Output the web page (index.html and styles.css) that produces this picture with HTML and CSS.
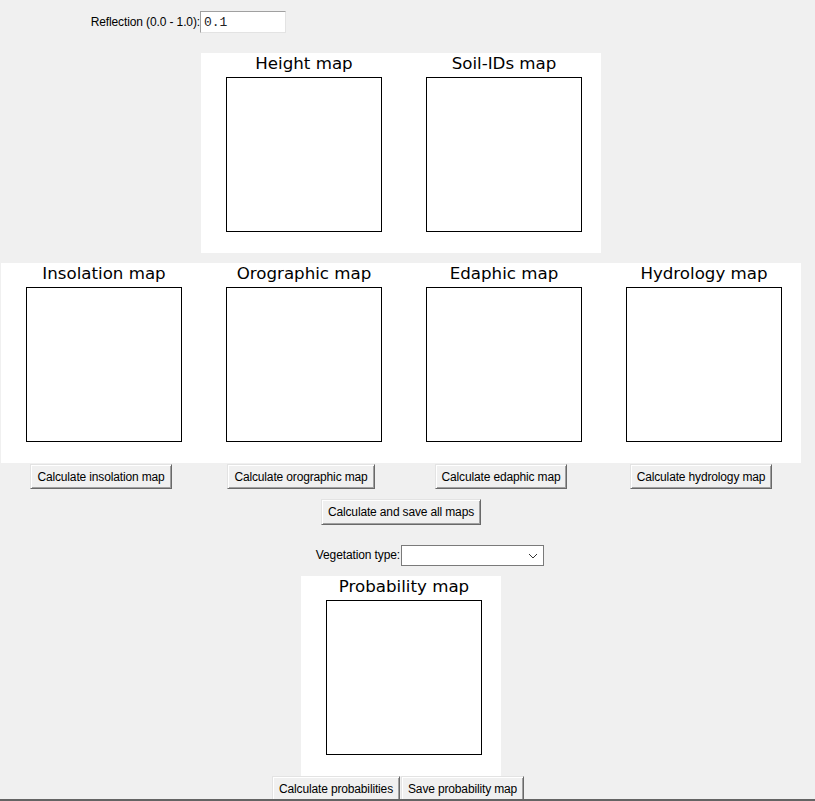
FILE: index.html
```html
<!DOCTYPE html>
<html lang="en">
<head>
  <meta charset="UTF-8" />
  <title>Vegetation maps</title>
  <link rel="stylesheet" href="styles.css">
</head>
<body>
  <div class="window">
    <div class="app">
      <!-- Параметри -->
      <label class="field-label row-reflection col-1">Reflection (0.0 - 1.0):</label>
      <input class="entry row-reflection col-2" type="text" value="0.1" />

      <!-- Вхідні карти -->
      <div class="figure fig-input">
        <div class="panel">
          <div class="ax-title">Height map</div>
          <div class="axes"></div>
        </div>
        <div class="panel">
          <div class="ax-title">Soil-IDs map</div>
          <div class="axes"></div>
        </div>
      </div>

      <!-- Розраховані карти -->
      <div class="figure fig-calc">
        <div class="panel">
          <div class="ax-title">Insolation map</div>
          <div class="axes"></div>
        </div>
        <div class="panel">
          <div class="ax-title">Orographic map</div>
          <div class="axes"></div>
        </div>
        <div class="panel">
          <div class="ax-title">Edaphic map</div>
          <div class="axes"></div>
        </div>
        <div class="panel">
          <div class="ax-title">Hydrology map</div>
          <div class="axes"></div>
        </div>
      </div>

      <button class="btn calc-btn col-1">Calculate insolation map</button>
      <button class="btn calc-btn col-2">Calculate orographic map</button>
      <button class="btn calc-btn col-3">Calculate edaphic map</button>
      <button class="btn calc-btn col-4">Calculate hydrology map</button>

      <button class="btn all-btn">Calculate and save all maps</button>

      <label class="field-label row-veg col-2">Vegetation type:</label>
      <div class="combo row-veg col-3">
        <svg width="10" height="6" viewBox="0 0 10 6"><polyline points="1,1 5,5 9,1" fill="none" stroke="#333" stroke-width="1"/></svg>
      </div>

      <!-- Ймовірність -->
      <div class="figure fig-prob">
        <div class="panel">
          <div class="ax-title">Probability map</div>
          <div class="axes"></div>
        </div>
      </div>

      <button class="btn row-last col-2 to-end">Calculate probabilities</button>
      <button class="btn row-last col-3 to-start">Save probability map</button>
    </div>
  </div>
  <div class="bottom-line"></div>
</body>
</html>
```

FILE: styles.css
```css
/* Загальні стилі */
html, body {
  margin: 0;
  padding: 0;
  height: 801px;
  overflow: hidden;
  background-color: #f0f0f0;
  font-family: "Liberation Sans", Arial, sans-serif;
  font-size: 12px;
  color: #000;
}

.window {
  height: 799px;
  overflow: hidden;
}

.bottom-line {
  height: 2px;
  background: #646464;
}

/* Сітка 4 x 200px */
.app {
  display: grid;
  grid-template-columns: repeat(4, 200px);
  margin-left: 1px;
  align-items: start;
}
.col-1 { grid-column: 1; }
.col-2 { grid-column: 2; }
.col-3 { grid-column: 3; }
.col-4 { grid-column: 4; }

/* Рядок з відбиттям */
.row-reflection {
  grid-row: 1;
  margin-top: 11px;
}
.field-label {
  justify-self: end;
  line-height: 22px;
  white-space: nowrap;
  padding-right: 1px;
  letter-spacing: -0.12px;
}
.entry {
  justify-self: start;
  box-sizing: border-box;
  width: 86px;
  height: 22px;
  margin-left: -1px;
  padding: 0 3px;
  background: #fff;
  border: 1px solid;
  border-color: #a0a0a0 #e3e3e3 #e3e3e3 #a0a0a0;
  font-family: "Liberation Mono", monospace;
  font-size: 13px;
  color: #222;
  outline: none;
}

/* Фігури matplotlib */
.figure {
  display: flex;
  background: #fff;
  height: 200px;
}
.fig-input {
  grid-row: 2;
  grid-column: 2 / span 2;
  margin-top: 20px;
}
.fig-calc {
  grid-row: 3;
  grid-column: 1 / span 4;
  margin-top: 10px;
}
.fig-prob {
  grid-row: 7;
  grid-column: 2 / span 2;
  justify-self: center;
  width: 200px;
  margin-top: 10px;
}
.panel {
  width: 200px;
  height: 200px;
}
.ax-title {
  width: 156px;
  margin-left: 25px;
  padding-top: 1px;
  text-align: center;
  white-space: nowrap;
  font-family: "DejaVu Sans", sans-serif;
  font-size: 16.67px;
  line-height: 20px;
  color: #000;
}
.axes {
  box-sizing: border-box;
  width: 156px;
  height: 155px;
  margin: 3px 0 0 25px;
  border: 1px solid #000;
  background: #fff;
}

/* Кнопки Tk */
.btn {
  box-sizing: border-box;
  height: 25px;
  padding: 0 6px;
  font-family: "Liberation Sans", Arial, sans-serif;
  font-size: 12px;
  letter-spacing: -0.15px;
  color: #000;
  background: #f0f0f0;
  border: 1px solid;
  border-color: #e3e3e3 #696969 #696969 #e3e3e3;
  box-shadow: inset 1px 1px #fff, inset -1px -1px #a0a0a0;
  white-space: nowrap;
  cursor: pointer;
}
.calc-btn {
  grid-row: 4;
  justify-self: center;
  margin-top: 1px;
}
.all-btn {
  grid-row: 5;
  grid-column: 2 / span 2;
  justify-self: center;
  margin-top: 10px;
  height: 26px;
}

/* Комбобокс */
.row-veg {
  grid-row: 6;
  margin-top: 20px;
}
.row-veg.field-label {
  line-height: 21px;
}
.combo {
  justify-self: start;
  box-sizing: border-box;
  width: 143px;
  height: 21px;
  background: #fff;
  border: 1px solid #7a7a7a;
  display: flex;
  align-items: center;
  justify-content: flex-end;
  padding-right: 5px;
}

/* Нижній ряд */
.row-last {
  grid-row: 8;
  height: 26px;
}
.to-end { justify-self: end; margin-right: 1px; }
.to-start { justify-self: start; margin-left: 0; }
```
